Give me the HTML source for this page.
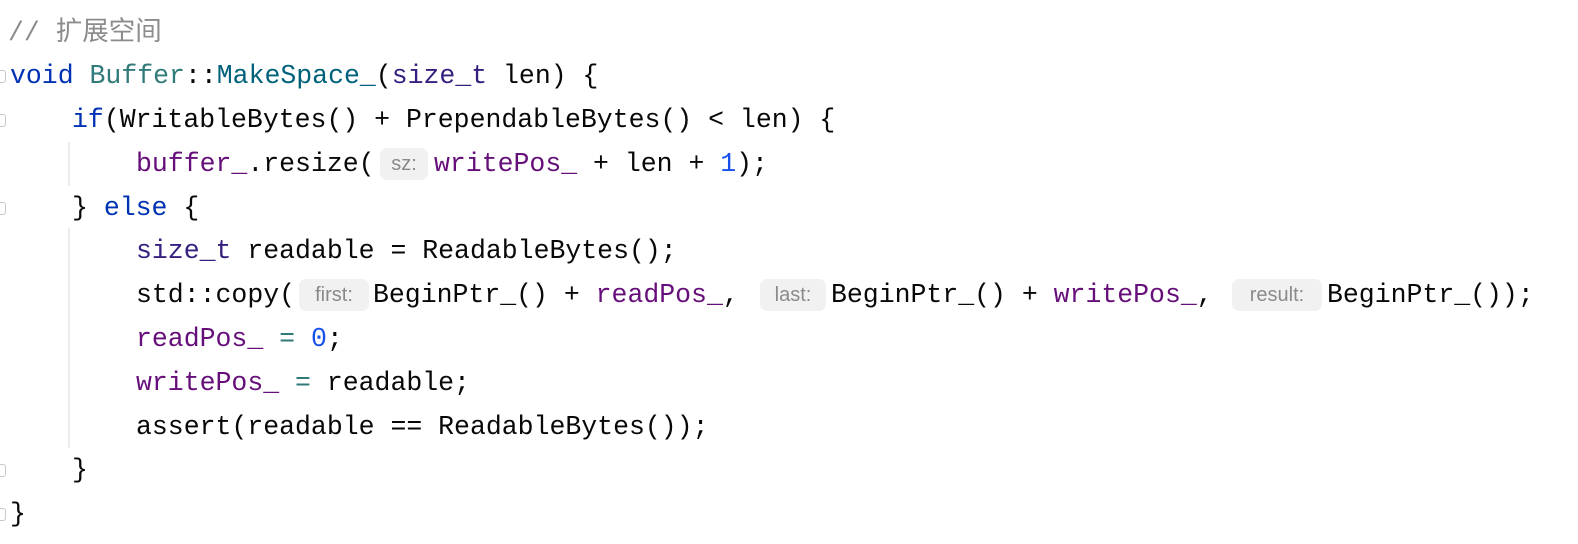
<!DOCTYPE html>
<html><head><meta charset="utf-8"><style>
html,body{margin:0;padding:0;background:#fff;width:1578px;height:544px;overflow:hidden}
.l{position:absolute;font-family:"Liberation Mono","DejaVu Sans Mono",monospace;font-size:26.5px;line-height:44px;height:44px;white-space:pre;color:#080808}
.k{color:#0033b3}.t{color:#317a7a}.f{color:#00627a}.p{color:#660e7a}.ty{color:#371f80}.n{color:#1750eb}.c{color:#8c8c8c;font-family:"Liberation Mono","Noto Sans CJK SC",monospace}.op{color:#317a7a}
.h{position:absolute;height:32px;line-height:32px;background:#f1f1f1;border-radius:7px;color:#8a8a8a;font-family:"Liberation Sans",sans-serif;font-size:20px;text-align:center}
.g{position:absolute;left:68px;width:2px;background:#ebebeb}
.m{position:absolute;left:0;width:6px;height:13px;border:1px solid #c8c8c8;border-left:none;border-radius:0 3px 3px 0;box-sizing:border-box}
</style></head><body>
<div class="g" style="top:142px;height:44px"></div>
<div class="g" style="top:228px;height:220px"></div>
<div class="m" style="top:70px"></div>
<div class="m" style="top:114px"></div>
<div class="m" style="top:202px"></div>
<div class="m" style="top:464px"></div>
<div class="m" style="top:508px"></div>

<div class="l c" style="left:8px;top:11px">// 扩展空间</div>
<div class="l" style="left:10px;top:54px"><span class="k">void</span> <span class="t">Buffer</span>::<span class="f">MakeSpace_</span>(<span class="ty">size_t</span> len) {</div>
<div class="l" style="left:72px;top:98px"><span class="k">if</span>(WritableBytes() + PrependableBytes() &lt; len) {</div>
<div class="l" style="left:136px;top:142px"><span class="p">buffer_</span>.resize(</div>
<div class="h" style="left:380px;top:148px;width:48px">sz:</div>
<div class="l" style="left:434px;top:142px"><span class="p">writePos_</span> + len + <span class="n">1</span>);</div>
<div class="l" style="left:72px;top:186px">} <span class="k">else</span> {</div>
<div class="l" style="left:136px;top:229px"><span class="ty">size_t</span> readable = ReadableBytes();</div>
<div class="l" style="left:136px;top:273px">std::copy(</div>
<div class="h" style="left:299px;top:279px;width:70px">first:</div>
<div class="l" style="left:373px;top:273px">BeginPtr_() + <span class="p">readPos_</span>,</div>
<div class="h" style="left:760px;top:279px;width:66px">last:</div>
<div class="l" style="left:831px;top:273px">BeginPtr_() + <span class="p">writePos_</span>,</div>
<div class="h" style="left:1232px;top:279px;width:90px">result:</div>
<div class="l" style="left:1327px;top:273px">BeginPtr_());</div>
<div class="l" style="left:136px;top:317px"><span class="p">readPos_</span> <span class="op">=</span> <span class="n">0</span>;</div>
<div class="l" style="left:136px;top:361px"><span class="p">writePos_</span> <span class="op">=</span> readable;</div>
<div class="l" style="left:136px;top:405px">assert(readable == ReadableBytes());</div>
<div class="l" style="left:72px;top:448px">}</div>
<div class="l" style="left:10px;top:492px">}</div>
</body></html>
